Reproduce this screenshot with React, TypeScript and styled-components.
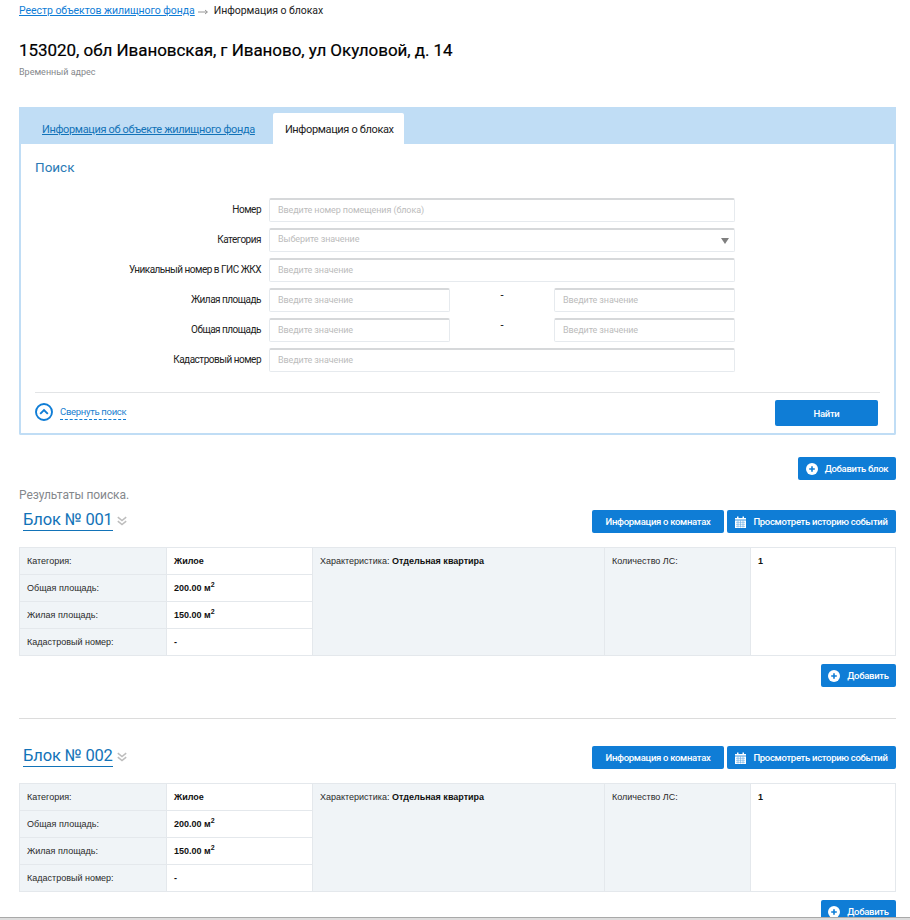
import React from "react";
import styled, { createGlobalStyle } from "styled-components";

const GlobalStyle = createGlobalStyle`
  html, body {
    margin: 0;
    padding: 0;
    height: 920px;
    overflow: hidden;
    background: #fff;
    font-family: Roboto, "Liberation Sans", sans-serif;
    color: #000;
  }
  * { box-sizing: border-box; }
`;

const Page = styled.div`
  width: 910px;
  padding: 0 14px 0 19px;
`;

// Header
const Breadcrumbs = styled.div`
  display: flex;
  align-items: center;
  gap: 0;
  height: 12px;
  margin-top: 5px;
  font-size: 10.5px;
  line-height: 12px;
  letter-spacing: -0.05px;
  color: #222;
`;

const CrumbLink = styled.a`
  color: #0f7dd6;
  text-decoration: underline;
`;

const CrumbArrow = styled.svg`
  margin: 1px 6px 0 3px;
`;

const Title = styled.h1`
  margin: 22px 0 0;
  font-size: 17px;
  line-height: 22px;
  font-weight: 400;
  letter-spacing: -0.05px;
  -webkit-text-stroke: 0.2px #000;
`;

const Subtitle = styled.div`
  margin-top: 6px;
  font-size: 9px;
  line-height: 11px;
  color: #85888c;
`;

// Tabs panel
const Panel = styled.section`
  margin-top: 29px;
  height: 328px;
  border: 2px solid #c0ddf5;
  border-top: none;
  border-radius: 0 0 2px 2px;
`;

const TabBar = styled.div`
  display: flex;
  align-items: flex-end;
  height: 37px;
  margin: 0 -2px;
  padding-left: 2px;
  background: #c0ddf5;
`;

const Tab = styled.div<{ $active?: boolean }>`
  height: 31px;
  padding: 1px ${(p) => (p.$active ? "10px" : "11px")} 0 12px;
  margin-right: ${(p) => (p.$active ? "0" : "7px")};
  margin-left: ${(p) => (p.$active ? "0" : "9px")};
  display: flex;
  align-items: center;
  font-size: 11px;
  letter-spacing: -0.35px;
  border-radius: 2px 2px 0 0;
  background: ${(p) => (p.$active ? "#fff" : "transparent")};
  color: ${(p) => (p.$active ? "#1c1c1c" : "#1273b8")};
  text-decoration: ${(p) => (p.$active ? "none" : "underline")};
`;

const SearchTitle = styled.h2`
  margin: 13px 0 0 14px;
  font-size: 13.5px;
  line-height: 20px;
  font-weight: 400;
  color: #2b7ab5;
`;

const Form = styled.div`
  display: flex;
  flex-direction: column;
  gap: 6px;
  margin-top: 21px;
`;

const Row = styled.div`
  display: grid;
  grid-template-columns: 240px 466px;
  column-gap: 8px;
  align-items: center;
`;

const Label = styled.label`
  text-align: right;
  font-size: 10px;
  letter-spacing: -0.5px;
  margin-top: -1px;
  color: #222;
`;

const Range = styled.div`
  display: grid;
  grid-template-columns: 181px 1fr 181px;
  align-items: center;
`;

const Dash = styled.span`
  text-align: center;
  font-size: 11px;
  line-height: 11px;
  margin-top: -10px;
`;

const FieldBox = styled.div`
  position: relative;
  height: 24px;
`;

const Input = styled.input<{ $select?: boolean }>`
  display: block;
  width: 100%;
  height: 24px;
  padding: 0 7px ${(p) => (p.$select ? "4px" : "2px")} 8px;
  border: 1px solid #e6eaee;
  border-top: 2px solid #d6d8da;
  border-radius: 2px;
  font-family: Roboto, sans-serif;
  font-size: 9px;
  letter-spacing: -0.1px;
  outline: none;
  background: #fff;
  &::placeholder {
    color: #bcbcbc;
    opacity: 1;
  }
`;

const SelectArrow = styled.span`
  position: absolute;
  right: 6px;
  top: 10px;
  width: 0;
  height: 0;
  border-left: 4.5px solid transparent;
  border-right: 4.5px solid transparent;
  border-top: 6px solid #7f7f7f;
`;

const FormFooter = styled.div`
  display: flex;
  align-items: flex-start;
  justify-content: space-between;
  height: 42px;
  margin: 20px 14px 0 14px;
  padding: 7px 2px 0 0;
  border-top: 1px solid #e2e4e6;
`;

const Collapse = styled.div`
  display: flex;
  align-items: center;
  gap: 7px;
  margin-top: 3px;
`;

const CollapseLink = styled.span`
  display: block;
  padding: 0 0 2px;
  margin-top: 2px;
  font-size: 9.5px;
  line-height: 11px;
  letter-spacing: -0.3px;
  width: 66px;
  white-space: nowrap;
  color: #1b7fd0;
  border-bottom: 1px dashed #0f7dd6;
`;

const Button = styled.button<{ $h?: number; $w?: number }>`
  display: inline-flex;
  align-items: center;
  justify-content: center;
  gap: 7px;
  width: ${(p) => (p.$w ? `${p.$w}px` : "auto")};
  height: ${(p) => p.$h ?? 23}px;
  padding: 0;
  border: none;
  border-radius: 2px;
  background: #0f7dd6;
  color: #fff;
  font-family: Roboto, sans-serif;
  font-size: 9.5px;
  font-weight: 500;
  letter-spacing: -0.3px;
  white-space: nowrap;
`;

const AddBlockRow = styled.div`
  display: flex;
  justify-content: flex-end;
  margin-top: 22px;
`;

const Results = styled.div`
  margin: 8px 0;
  font-size: 12px;
  line-height: 14px;
  letter-spacing: -0.1px;
  color: #85888c;
`;

// Block
const BlockHeader = styled.div`
  display: flex;
  align-items: center;
  justify-content: space-between;
  height: 23px;
`;

const BlockTitleWrap = styled.div`
  display: flex;
  align-items: center;
  gap: 4px;
  padding-left: 4px;
  margin-top: -2px;
`;

const BlockTitle = styled.a`
  font-size: 16.5px;
  line-height: 20px;
  color: #1273b8;
  border-bottom: 1px solid #1273b8;
  letter-spacing: -0.15px;
`;

const ButtonGroup = styled.div`
  display: flex;
  gap: 3px;
`;

const Table = styled.div`
  display: grid;
  grid-template-columns: 147px 146px 292px 146px 144px;
  grid-template-rows: 27px 27px 27px 26px;
  margin-top: 14px;
  height: 109px;
  border: 1px solid #e4e8ec;
  font-family: "Liberation Sans", Arial, sans-serif;
  font-size: 9px;
  color: #2a2a2a;
`;

const Cell = styled.div<{ $head?: boolean; $col?: number; $noRight?: boolean; $noBottom?: boolean }>`
  padding: ${(p) => (p.$col ? "8px 7px" : "0 7px")};
  display: block;
  ${(p) => (p.$col ? "" : "display: flex; align-items: center; gap: 3px;")}
  background: ${(p) => (p.$head ? "#f0f4f7" : "#fff")};
  border-right: ${(p) => (p.$noRight ? "none" : "1px solid #e4e8ec")};
  border-bottom: ${(p) => (p.$noBottom || p.$col ? "none" : "1px solid #e4e8ec")};
  ${(p) => (p.$col ? `grid-column: ${p.$col}; grid-row: 1 / span 4;` : "")}
  line-height: 11px;
`;

const Strong = styled.b`
  font-weight: 700;
  color: #111;
`;

const Sup = styled.sup`
  font-size: 7px;
  line-height: 0;
`;

const AddRow = styled.div`
  display: flex;
  justify-content: flex-end;
  margin-top: 8px;
`;

const Separator = styled.hr`
  margin: 31px 0 27px;
  border: none;
  border-top: 1px solid #dcdcdc;
`;

const BottomEdge = styled.div`
  position: fixed;
  left: 0;
  right: 0;
  bottom: 0;
  height: 3px;
  background: #dcdcdc;
  border-top: 1px solid #a9a9a9;
`;

const PlusIcon = () => (
  <svg width="12" height="12" viewBox="0 0 12 12">
    <circle cx="6" cy="6" r="6" fill="#fff" />
    <path d="M6 3.2v5.6M3.2 6h5.6" stroke="#0f7dd6" strokeWidth="1.6" />
  </svg>
);

const CalendarIcon = () => (
  <svg width="11" height="12" viewBox="0 0 11 12">
    <path d="M0 2h11v10H0z" fill="#fff" />
    <path d="M2 0.5h1.5V3H2zM7.5 0.5H9V3H7.5z" fill="#fff" />
    <path d="M0 4h11" stroke="#0f7dd6" strokeWidth="0.8" />
    <path
      d="M1 6.3h9M1 8.3h9M1 10.3h9M3 4.5v7M5.5 4.5v7M8 4.5v7"
      stroke="#0f7dd6"
      strokeWidth="0.6"
      opacity="0.65"
    />
  </svg>
);

const ChevronsIcon = () => (
  <svg width="10" height="10" viewBox="0 0 10 10" fill="none" stroke="#bdbdbd" strokeWidth="1.5">
    <path d="M0.8 1.2 5 4.6 9.2 1.2" />
    <path d="M0.8 5.2 5 8.6 9.2 5.2" />
  </svg>
);

const CollapseIcon = () => (
  <svg width="18" height="18" viewBox="0 0 18 18" fill="none" stroke="#0f7dd6">
    <circle cx="9" cy="9" r="8" strokeWidth="1.9" />
    <path d="M5.2 10.8 9 7l3.8 3.8" strokeWidth="1.9" />
  </svg>
);

function Block({ number }: { number: string }) {
  return (
    <>
      <BlockHeader>
        <BlockTitleWrap>
          <BlockTitle>Блок № {number}</BlockTitle>
          <ChevronsIcon />
        </BlockTitleWrap>
        <ButtonGroup>
          <Button $w={132}>Информация о комнатах</Button>
          <Button $w={169}>
            <CalendarIcon />
            Просмотреть историю событий
          </Button>
        </ButtonGroup>
      </BlockHeader>
      <Table>
        <Cell $head>Категория:</Cell>
        <Cell>
          <Strong>Жилое</Strong>
        </Cell>
        <Cell $head $col={3}>
          Характеристика: <Strong>Отдельная квартира</Strong>
        </Cell>
        <Cell $head $col={4}>
          Количество ЛС:
        </Cell>
        <Cell $col={5} $noRight>
          <Strong>1</Strong>
        </Cell>
        <Cell $head>Общая площадь:</Cell>
        <Cell>
          <Strong>
            200.00 м<Sup>2</Sup>
          </Strong>
        </Cell>
        <Cell $head>Жилая площадь:</Cell>
        <Cell>
          <Strong>
            150.00 м<Sup>2</Sup>
          </Strong>
        </Cell>
        <Cell $head $noBottom>
          Кадастровый номер:
        </Cell>
        <Cell $noBottom>
          <Strong>-</Strong>
        </Cell>
      </Table>
      <AddRow>
        <Button $w={75}>
          <PlusIcon />
          Добавить
        </Button>
      </AddRow>
    </>
  );
}

export default function App() {
  return (
    <Page>
      <GlobalStyle />
      <Breadcrumbs>
        <CrumbLink>Реестр объектов жилищного фонда</CrumbLink>
        <CrumbArrow width="10" height="6" viewBox="0 0 10 6" fill="none" stroke="#8a8a8a">
          <path d="M0 3h9.2M7 1l2.4 2L7 5" strokeWidth="0.9" />
        </CrumbArrow>
        Информация о блоках
      </Breadcrumbs>
      <Title>153020, обл Ивановская, г Иваново, ул Окуловой, д. 14</Title>
      <Subtitle>Временный адрес</Subtitle>

      <Panel>
        <TabBar>
          <Tab>Информация об объекте жилищного фонда</Tab>
          <Tab $active>Информация о блоках</Tab>
        </TabBar>
        <SearchTitle>Поиск</SearchTitle>
        <Form>
          <Row>
            <Label>Номер</Label>
            <Input placeholder="Введите номер помещения (блока)" />
          </Row>
          <Row>
            <Label>Категория</Label>
            <FieldBox>
              <Input $select placeholder="Выберите значение" />
              <SelectArrow />
            </FieldBox>
          </Row>
          <Row>
            <Label>Уникальный номер в ГИС ЖКХ</Label>
            <Input placeholder="Введите значение" />
          </Row>
          <Row>
            <Label>Жилая площадь</Label>
            <Range>
              <Input placeholder="Введите значение" />
              <Dash>-</Dash>
              <Input placeholder="Введите значение" />
            </Range>
          </Row>
          <Row>
            <Label>Общая площадь</Label>
            <Range>
              <Input placeholder="Введите значение" />
              <Dash>-</Dash>
              <Input placeholder="Введите значение" />
            </Range>
          </Row>
          <Row>
            <Label>Кадастровый номер</Label>
            <Input placeholder="Введите значение" />
          </Row>
        </Form>
        <FormFooter>
          <Collapse>
            <CollapseIcon />
            <CollapseLink>Свернуть поиск</CollapseLink>
          </Collapse>
          <Button $w={103} $h={26}>
            Найти
          </Button>
        </FormFooter>
      </Panel>

      <AddBlockRow>
        <Button $w={98}>
          <PlusIcon />
          Добавить блок
        </Button>
      </AddBlockRow>
      <Results>Результаты поиска.</Results>

      <Block number="001" />
      <Separator />
      <Block number="002" />
      <BottomEdge />
    </Page>
  );
}
